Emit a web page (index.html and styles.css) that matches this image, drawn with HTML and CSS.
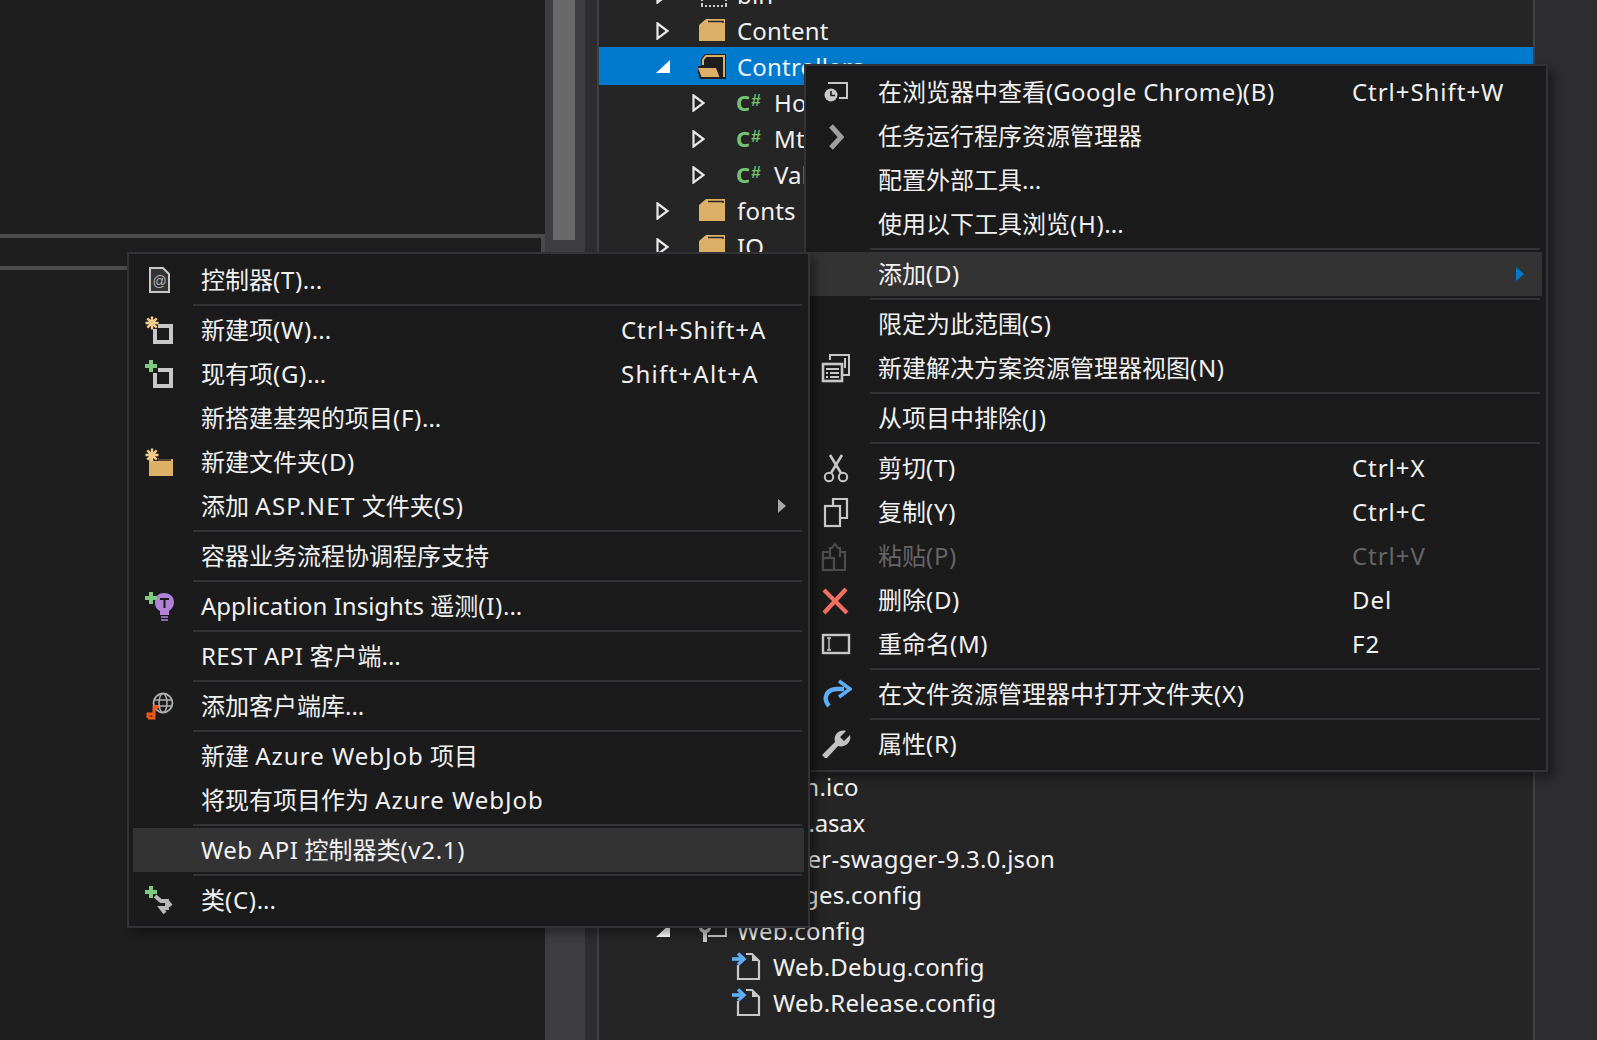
FILE: index.html
```html
<!DOCTYPE html>
<html lang="zh-CN">
<head>
<meta charset="utf-8">
<title>Solution Explorer</title>
<link rel="stylesheet" href="styles.css">
</head>
<body>
<svg class="defs" width="0" height="0" aria-hidden="true">
  <defs>
    <symbol id="tog" viewBox="0 0 14 18"><path d="M1.500 1.500 L11.500 9 L1.500 16.500 Z" fill="none" stroke="#e8e8e8" stroke-width="2.200"/></symbol>
    <symbol id="open" viewBox="0 0 14 18"><path d="M0 15 H14 V2 Z" fill="#fff"/></symbol>
    <symbol id="folder" viewBox="0 0 32 32"><path d="M1 10 L8 4 H27 V26 H1 Z" fill="#dcb067"/><path d="M10 6.500 H25 V8" fill="none" stroke="#252526" stroke-width="1.500"/></symbol>
    <symbol id="star" viewBox="0 0 16 16"><path d="M8 1 V15 M1 8 H15 M3 3 L13 13 M13 3 L3 13" stroke="#f3cb8d" stroke-width="2.600"/></symbol>
    <symbol id="plus" viewBox="0 0 14 14"><path d="M7 1 V13 M1 7 H13" stroke="#80c980" stroke-width="4"/></symbol>
    <symbol id="docarrow" viewBox="0 0 32 32"><path d="M6 14 V28 H27 V10 L20 3 H14" fill="none" stroke="#c8c8c8" stroke-width="2.200"/><path d="M20 3 L27 10 H20 Z" fill="#c8c8c8"/><path d="M0 8 H10" stroke="#5caff8" stroke-width="3.600"/><path d="M6 2.500 L12 8 L6 13.500" fill="none" stroke="#5caff8" stroke-width="3.400"/></symbol>
  </defs>
</svg>

<div class="ide">
  <section class="editor">
    <div class="editor-top"></div>
    <div class="editor-lower"><div class="output-rule"></div></div>
  </section>
  <div class="scroll"><div class="thumb"></div></div>
  <div class="gutter"></div>
  <section class="tree">
    <div class="row l1"><svg class="tg"><use href="#tog"/></svg><svg class="ic" viewBox="0 0 32 32"><path d="M3 27 H29 M4 20 V27 M28 20 V27" stroke="#d0d0d0" stroke-width="2" stroke-dasharray="2 2" fill="none"/></svg><span>bin</span></div>
    <div class="row l1"><svg class="tg"><use href="#tog"/></svg><svg class="ic"><use href="#folder"/></svg><span>Content</span></div>
    <div class="row l1 sel"><svg class="tg"><use href="#open"/></svg><svg class="ic" viewBox="2 0 32 32"><path d="M5 15 V8 L9 3 H30 V28 H5 Z" fill="#1e1e1e"/><path d="M7 14 V8.500 L10 5 H28 V26" fill="none" stroke="#dcb067" stroke-width="2"/><path d="M0 15 H21 L26 28 H4 Z" fill="#1e1e1e"/><path d="M2 17 H20 L23.500 26 H5.500 Z" fill="#dcb067"/></svg><span>Controllers</span></div>
    <div class="row l2"><svg class="tg"><use href="#tog"/></svg><span class="cs">C<sup>#</sup></span><span>HomeController.cs</span></div>
    <div class="row l2"><svg class="tg"><use href="#tog"/></svg><span class="cs">C<sup>#</sup></span><span>MtController.cs</span></div>
    <div class="row l2"><svg class="tg"><use href="#tog"/></svg><span class="cs">C<sup>#</sup></span><span>ValuesController.cs</span></div>
    <div class="row l1"><svg class="tg"><use href="#tog"/></svg><svg class="ic"><use href="#folder"/></svg><span>fonts</span></div>
    <div class="row l1"><svg class="tg"><use href="#tog"/></svg><svg class="ic"><use href="#folder"/></svg><span>IO</span></div>
    <div class="row-spacer"></div>
    <div class="row l1"><span class="no-ic"></span><span>favicon.ico</span></div>
    <div class="row l1 tight"><span class="no-ic"></span><span>Global.asax</span></div>
    <div class="row l1"><span class="no-ic"></span><span>mserver-swagger-9.3.0.json</span></div>
    <div class="row l1"><span class="no-ic"></span><span>packages.config</span></div>
    <div class="row l1"><svg class="tg"><use href="#open"/></svg><svg class="ic" viewBox="0 0 32 32"><path d="M10 21 H28 V10" fill="none" stroke="#c8c8c8" stroke-width="2"/><circle cx="7" cy="12" r="4.500" fill="none" stroke="#c8c8c8" stroke-width="3.400"/><path d="M7 15 V27" stroke="#c8c8c8" stroke-width="4"/></svg><span>Web.config</span></div>
    <div class="row l2 leaf"><svg class="ic"><use href="#docarrow"/></svg><span>Web.Debug.config</span></div>
    <div class="row l2 leaf"><svg class="ic"><use href="#docarrow"/></svg><span>Web.Release.config</span></div>
  </section>
  <div class="margin-r"></div>
</div>

<nav class="menu menu-right">
  <div class="item"><svg class="mi" viewBox="0 0 32 32"><path d="M8 7 H27 V22 H19" fill="none" stroke="#c8c8c8" stroke-width="2"/><circle cx="11" cy="19" r="6.500" fill="#c8c8c8"/><path d="M11 15 V19.500 H15" fill="none" stroke="#1b1b1c" stroke-width="1.600"/></svg><span class="label">在浏览器中查看(<span class="lat">Google Chrome</span>)<span class="p">(B)</span></span><span class="key">Ctrl+Shift+W</span></div>
  <div class="item"><svg class="mi" viewBox="0 0 32 32"><path d="M11 6 L21 17 L11 28" fill="none" stroke="#a0a0a0" stroke-width="5"/></svg><span class="label">任务运行程序资源管理器</span></div>
  <div class="item"><span class="mi"></span><span class="label">配置外部工具...</span></div>
  <div class="item"><span class="mi"></span><span class="label">使用以下工具浏览<span class="p">(H)</span>...</span></div>
  <div class="sep"></div>
  <div class="item hover"><span class="mi"></span><span class="label">添加<span class="p">(D)</span></span><i class="arrow blue"></i></div>
  <div class="sep"></div>
  <div class="item"><span class="mi"></span><span class="label">限定为此范围<span class="p">(S)</span></span></div>
  <div class="item"><svg class="mi" viewBox="0 0 32 32"><path d="M10 8 V3 H29 V23 H22 M25 6 V16" fill="none" stroke="#c8c8c8" stroke-width="2"/><rect x="3" y="12" width="19" height="17" fill="#1b1b1c" stroke="#c8c8c8" stroke-width="2.600"/><path d="M6 17 H19 M6 21 H8 M10 21 H19 M6 25 H8 M10 25 H19" stroke="#c8c8c8" stroke-width="1.800"/></svg><span class="label">新建解决方案资源管理器视图<span class="p">(N)</span></span></div>
  <div class="sep"></div>
  <div class="item"><span class="mi"></span><span class="label">从项目中排除<span class="p j">(J)</span></span></div>
  <div class="sep"></div>
  <div class="item"><svg class="mi" viewBox="0 0 32 32"><path d="M11 21 L22 3 M21 21 L10 3" stroke="#c8c8c8" stroke-width="2.600" fill="none"/><circle cx="9" cy="25" r="4.200" fill="none" stroke="#c8c8c8" stroke-width="2"/><circle cx="23" cy="25" r="4.200" fill="none" stroke="#c8c8c8" stroke-width="2"/></svg><span class="label">剪切<span class="p">(T)</span></span><span class="key">Ctrl+X</span></div>
  <div class="item"><svg class="mi" viewBox="0 0 32 32"><rect x="5" y="10" width="15" height="20" fill="none" stroke="#c8c8c8" stroke-width="2.200"/><path d="M13 9 V3 H27 V22 H21" fill="none" stroke="#c8c8c8" stroke-width="2.200"/></svg><span class="label">复制<span class="p">(Y)</span></span><span class="key">Ctrl+C</span></div>
  <div class="item off"><svg class="mi" viewBox="0 0 32 32"><path d="M10 12 H3 V30 H25 V12 H19" fill="none" stroke="#4c4c4c" stroke-width="2.200"/><path d="M10 17 V8 H12 L15 4 L18 8 H20 V17" fill="none" stroke="#4c4c4c" stroke-width="2.200"/><rect x="3" y="18" width="11" height="12" fill="none" stroke="#4c4c4c" stroke-width="2.200"/></svg><span class="label">粘贴<span class="p">(P)</span></span><span class="key">Ctrl+V</span></div>
  <div class="item"><svg class="mi" viewBox="0 0 32 32"><path d="M4 6 L27 29 M26 5 L4 29" stroke="#f1705f" stroke-width="4.200" fill="none"/></svg><span class="label">删除<span class="p">(D)</span></span><span class="key">Del</span></div>
  <div class="item"><svg class="mi" viewBox="0 0 32 32"><rect x="3" y="7" width="26" height="18" fill="none" stroke="#c8c8c8" stroke-width="2.400"/><path d="M7 10 H11 M7 22 H11 M9 10 V22" stroke="#c8c8c8" stroke-width="1.400"/></svg><span class="label">重命名<span class="p">(M)</span></span><span class="key">F2</span></div>
  <div class="sep"></div>
  <div class="item"><svg class="mi" viewBox="0 0 32 32"><path d="M9 28 C2 20 7 11 17 11 H24" fill="none" stroke="#5caff8" stroke-width="4.400"/><path d="M19 3 L30 11 L19 19" fill="none" stroke="#5caff8" stroke-width="3.600"/></svg><span class="label">在文件资源管理器中打开文件夹<span class="p">(X)</span></span></div>
  <div class="sep"></div>
  <div class="item"><svg class="mi" viewBox="0 0 32 32"><path d="M5 30 L2 27 L15 14 C13 7 19 1 26 3 L20 9 L24 13 L30 7 C32 14 25 20 18 18 L7 30 Z" fill="#c2c2c2"/></svg><span class="label">属性<span class="p">(R)</span></span></div>
</nav>

<nav class="menu menu-left">
  <div class="item"><svg class="mi" viewBox="0 0 32 32"><path d="M7 4 H20 L26 10 V28 H7 Z" fill="#333334" stroke="#c8c8c8" stroke-width="2"/><text x="16.500" y="22" class="at">@</text></svg><span class="label">控制器<span class="p">(T)</span>...</span></div>
  <div class="sep"></div>
  <div class="item"><svg class="mi" viewBox="0 0 32 32"><rect x="12" y="12" width="16" height="16" fill="none" stroke="#c8c8c8" stroke-width="4"/><rect x="9" y="9" width="6" height="6" fill="#1b1b1c"/><use href="#star" x="1.500" y="1.500" width="15" height="15"/></svg><span class="label">新建项<span class="p">(W)</span>...</span><span class="key">Ctrl+Shift+A</span></div>
  <div class="item"><svg class="mi" viewBox="0 0 32 32"><rect x="12" y="12" width="16" height="16" fill="none" stroke="#c8c8c8" stroke-width="4"/><rect x="9" y="9" width="6" height="6" fill="#1b1b1c"/><use href="#plus" x="1" y="1" width="14" height="14"/></svg><span class="label">现有项<span class="p">(G)</span>...</span><span class="key alt">Shift+Alt+A</span></div>
  <div class="item"><span class="mi"></span><span class="label">新搭建基架的项目<span class="p">(F)</span>...</span></div>
  <div class="item"><svg class="mi" viewBox="0 0 32 32"><path d="M6 10 H12 L16 13 H30 V30 H6 Z" fill="#dcb067"/><path d="M15 14 H28" stroke="#1b1b1c" stroke-width="1.400"/><rect x="9" y="9" width="6" height="6" fill="#1b1b1c"/><use href="#star" x="1.500" y="1.500" width="15" height="15"/></svg><span class="label">新建文件夹<span class="p">(D)</span></span></div>
  <div class="item"><span class="mi"></span><span class="label">添加 <span class="asp">ASP.NET</span> 文件夹<span class="p">(S)</span></span><i class="arrow"></i></div>
  <div class="sep"></div>
  <div class="item"><span class="mi"></span><span class="label">容器业务流程协调程序支持</span></div>
  <div class="sep"></div>
  <div class="item"><svg class="mi" viewBox="0 0 32 32"><path d="M17 25 V21 C13 19 12 16 12 12 C12 6 16 3 21 3 C26 3 31 6 31 12 C31 16 29 19 26 21 V25 Z" fill="#b180d7"/><path d="M17 9 H26 M21.500 9 V18" stroke="#1b1b1c" stroke-width="2"/><path d="M18 27 H25 M18 30 H25" stroke="#b180d7" stroke-width="1.700"/><use href="#plus" x="1" y="1" width="14" height="14"/></svg><span class="label"><span class="app">Application Insights</span> 遥测<span class="p">(I)</span>...</span></div>
  <div class="sep"></div>
  <div class="item"><span class="mi"></span><span class="label"><span class="lat">REST API</span> 客户端...</span></div>
  <div class="sep"></div>
  <div class="item"><svg class="mi" viewBox="0 0 32 32"><circle cx="20" cy="13" r="9.500" fill="none" stroke="#b0b0b0" stroke-width="1.800"/><ellipse cx="20" cy="13" rx="4" ry="9.500" fill="none" stroke="#b0b0b0" stroke-width="1.500"/><path d="M11 10 H29 M11 16 H29" stroke="#b0b0b0" stroke-width="1.500"/><path d="M5 28 H11 V17 H16 M5 28 V24 H11" fill="none" stroke="#f0581a" stroke-width="3"/></svg><span class="label">添加客户端库...</span></div>
  <div class="sep"></div>
  <div class="item"><span class="mi"></span><span class="label">新建 <span class="wide">Azure WebJob</span> 项目</span></div>
  <div class="item"><span class="mi"></span><span class="label">将现有项目作为 <span class="wide">Azure WebJob</span></span></div>
  <div class="sep"></div>
  <div class="item hover"><span class="mi"></span><span class="label"><span class="lat">Web API</span> 控制器类<span class="p">(v2.1)</span></span></div>
  <div class="sep"></div>
  <div class="item"><svg class="mi" viewBox="0 0 32 32"><path d="M12 12 L18 17 H24 L28 22 M24 15 V24 H18 L22 29" fill="none" stroke="#b8b8b8" stroke-width="3.800"/><use href="#plus" x="1" y="1" width="14" height="14"/></svg><span class="label">类<span class="p">(C)</span>...</span></div>
</nav>
</body>
</html>
```

FILE: styles.css
```css
html, body { margin: 0; padding: 0; height: 100%; background: #1e1e1e; overflow: hidden; }
body { font-family: "Noto Sans", "Noto Sans CJK SC", sans-serif; color: #f1f1f1; font-size: 24px; }
.defs { position: absolute; }
.ide { display: flex; height: 1040px; }
.editor { width: 545px; flex: none; display: flex; flex-direction: column; }
.editor-top { height: 234px; background: #1e1e1e; }
.editor-lower { height: 660px; box-sizing: border-box; border-top: 4px solid #4a4a4a; border-right: 4px solid #4a4a4a; padding-top: 28px; }
.output-rule { height: 4px; background: #4a4a4a; }
.scroll { width: 40px; flex: none; background: #3e3e42; padding-left: 8px; box-sizing: border-box; }
.thumb { width: 22px; height: 240px; background: #686868; }
.gutter { width: 14px; flex: none; box-sizing: border-box; background: #2d2d30; border-right: 2px solid #3f3f46; }
.tree { width: 934px; flex: none; background: #252526; overflow: hidden; }
.margin-r { flex: 1; background: #2d2d30; border-left: 2px solid #3f3f46; }

.row { height: 36px; display: flex; align-items: center; white-space: nowrap; letter-spacing: 0.2px; }
.row > span:last-child { padding-bottom: 2px; }
.row:first-child { margin-top: -23px; }
.row.tight { letter-spacing: -0.2px; }
.l1 { padding-left: 57px; }
.l2 { padding-left: 93px; }
.leaf { padding-left: 133px; }
.sel { background: #007acc; height: 38px; margin-top: -2px; padding-top: 2px; box-sizing: border-box; }
.tg { width: 14px; height: 18px; margin-right: 28px; flex: none; }
.ic { width: 32px; height: 32px; margin-right: 7px; flex: none; }
.no-ic { width: 81px; flex: none; }
.leaf .ic { margin-right: 9px; }
.cs { width: 32px; margin-right: 8px; padding: 0 0 3px 2px; color: #75c475; font-weight: 700; font-size: 22px; box-sizing: border-box; letter-spacing: 0; line-height: 1; flex: none; }
.cs sup { font-family: "Liberation Sans", sans-serif; font-size: 17px; vertical-align: 5px; line-height: 0; margin-left: 1px; }
.row-spacer { height: 504px; }

.menu { position: absolute; box-sizing: border-box; background: #1b1b1c; border: 2px solid #333337; box-shadow: 6px 6px 8px rgba(0,0,0,.35); }
.menu-right { left: 804px; top: 64px; width: 744px; height: 708px; padding: 4px; }
.menu-left { left: 127px; top: 252px; width: 683px; height: 676px; padding: 4px; }
.item { height: 44px; display: flex; align-items: center; white-space: nowrap; position: relative; }
.item.hover { background: #333334; }
.item.off { color: #656565; }
.mi { display: block; width: 32px; height: 32px; margin-left: 10px; margin-right: 26px; flex: none; }
.label { flex: 1; padding-bottom: 3px; }
.lat { letter-spacing: 0.4px; }
.app { letter-spacing: 0; }
.wide { letter-spacing: 1px; }
.asp { letter-spacing: 1.3px; }
.p { letter-spacing: 0.7px; }
.j { letter-spacing: 1.5px; }
.key { position: absolute; letter-spacing: 0.95px; padding-bottom: 2px; }
.key.alt { letter-spacing: 1.25px; }
.menu-right .key { left: 542px; }
.menu-left .key { left: 488px; }
.sep { height: 2px; margin: 2px 2px 2px 60px; background: #333337; }
.arrow { width: 0; height: 0; border-left: 8px solid #a8a8a8; border-top: 7px solid transparent; border-bottom: 7px solid transparent; margin-right: 18px; flex: none; }
.arrow.blue { border-left-color: #007acc; }
.at { font-size: 14px; fill: #b4b4b4; text-anchor: middle; font-family: "Liberation Sans", sans-serif; }
```
